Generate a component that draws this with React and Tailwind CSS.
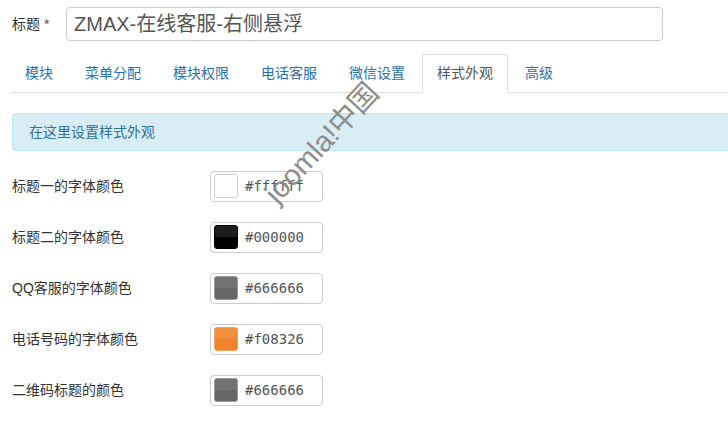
import React from 'react';

const font = 'font-["Liberation_Sans","Noto_Sans_CJK_SC",sans-serif]';

const tabs = ['模块', '菜单分配', '模块权限', '电话客服', '微信设置', '样式外观', '高级'];

const colorRows = [
    { label: '标题一的字体颜色', value: '#ffffff', swatch: 'bg-white border-[#ccc]', shade: 'bg-white' },
    { label: '标题二的字体颜色', value: '#000000', swatch: 'bg-black border-black', shade: 'bg-[#1c1c1c]' },
    { label: 'QQ客服的字体颜色', value: '#666666', swatch: 'bg-[#666666] border-[#999]', shade: 'bg-[#727272]' },
    { label: '电话号码的字体颜色', value: '#f08326', swatch: 'bg-[#f08326] border-[#f3a060]', shade: 'bg-[#f28f3c]' },
    { label: '二维码标题的颜色', value: '#666666', swatch: 'bg-[#666666] border-[#999]', shade: 'bg-[#727272]' },
];

const ColorRow = ({ row }) => (
    <div className="flex items-center h-[30px]">
        <div className="w-[198px] text-[14px] leading-[20px] text-[#333]">{row.label}</div>
        <div className="flex items-center w-[113px] h-[31px] border border-[#ccc] rounded-[4px] bg-white pl-[3px]">
            <div className={`flex flex-col w-[24px] h-[24px] rounded-[3px] border overflow-hidden ${row.swatch}`}>
                <div className={`h-1/2 ${row.shade}`} />
            </div>
            <span className='ml-[7px] text-[14px] text-[#555] font-["DejaVu_Sans_Mono",monospace]'>{row.value}</span>
        </div>
    </div>
);

export default function App() {
    return (
        <div className={`relative w-[728px] h-[435px] overflow-hidden bg-white pl-[12px] pt-[7px] ${font}`}>
            {/* title */}
            <div className="flex items-center">
                <div className="w-[54px] text-[14px] leading-[20px] text-[#333]">
                    标题 <span className="text-[#555]">*</span>
                </div>
                <div className="flex items-center w-[597px] h-[34px] border border-[#ccc] rounded-[4px] pl-[7px]">
                    <span className="text-[20px] leading-[24px] text-[#555]">ZMAX-在线客服-右侧悬浮</span>
                </div>
            </div>

            {/* tabs */}
            <div className="mt-[13px] border-b border-[#ddd]">
                <div className="flex -ml-[2px]">
                    {tabs.map((t) => {
                        const active = t === '样式外观';
                        return (
                            <div
                                key={t}
                                className={`mr-[2px] -mb-px px-[14px] h-[39px] flex items-center text-[14px] rounded-t-[4px] border ${
                                    active
                                        ? 'bg-white border-[#ddd] border-b-white text-[#555]'
                                        : 'border-transparent text-[#2a6fae]'
                                }`}
                            >
                                {t}
                            </div>
                        );
                    })}
                </div>
            </div>

            {/* alert */}
            <div className="mt-[20px] h-[38px] flex items-center pl-[16px] bg-[#d9edf7] border border-[#bce8f1] border-r-0 rounded-l-[4px] text-[14px] text-[#31708f]">
                在这里设置样式外观
            </div>

            {/* color rows */}
            <div className="mt-[20px] flex flex-col gap-[21px]">
                {colorRows.map((r, i) => (
                    <ColorRow key={i} row={r} />
                ))}
            </div>

            {/* watermark */}
            <div className="absolute left-[322px] top-[143px] -translate-x-1/2 -translate-y-1/2 -rotate-[47deg] whitespace-nowrap text-[29px] leading-none text-[#8c8c8c] pointer-events-none">
                joomla!中国
            </div>
        </div>
    );
}
